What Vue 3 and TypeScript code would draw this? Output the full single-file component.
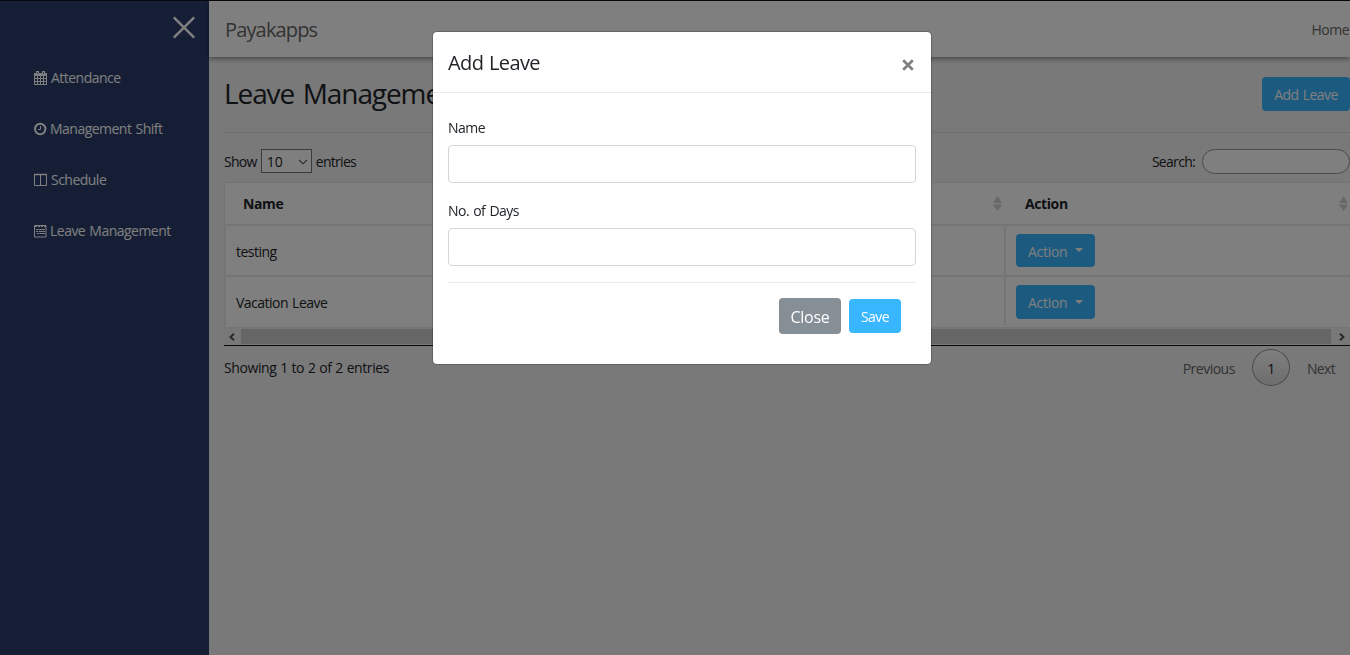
<script setup lang="ts">
import { ref } from 'vue'

interface MenuItem {
  icon: 'calendar' | 'clock' | 'columns' | 'list'
  label: string
}

const menu: MenuItem[] = [
  { icon: 'calendar', label: 'Attendance' },
  { icon: 'clock', label: 'Management Shift' },
  { icon: 'columns', label: 'Schedule' },
  { icon: 'list', label: 'Leave Management' },
]

const rows = ref<string[]>(['testing', 'Vacation Leave'])
const leaveName = ref('')
const leaveDays = ref('')
const query = ref('')
</script>

<template>
  <div class="page">
    <aside class="sidebar">
      <div class="sidebar-top">
        <svg class="sidebar-close" width="24" height="24" viewBox="0 0 24 24">
          <path d="M1.800 1.300 22.200 21.700M22.200 1.300 1.800 21.700" fill="none" stroke="#fff" stroke-width="2.500" />
        </svg>
      </div>
      <nav class="menu">
        <a v-for="item in menu" :key="item.label" class="menu-item">
          <svg class="menu-icon" :class="item.icon" width="14" height="14" viewBox="0 0 14 14" fill="none" stroke="currentColor">
            <template v-if="item.icon === 'calendar'">
              <path d="M0 2h13v12H0z" fill="currentColor" stroke="none" />
              <path d="M2 0h3v3.500H2zM8 0h3v3.500H8z" fill="currentColor" stroke="none" />
              <path d="M3.500 1v2M9.500 1v2" stroke="#2a3d6b" stroke-width=".7" />
              <path d="M1 5h2v2H1zM4 5h2v2H4zM7 5h2v2H7zM10 5h2v2h-2zM1 8h2v2H1zM4 8h2v2H4zM7 8h2v2H7zM10 8h2v2h-2zM1 11h2v2H1zM4 11h2v2H4zM7 11h2v2H7zM10 11h2v2h-2z" fill="#2a3d6b" stroke="none" />
            </template>
            <template v-else-if="item.icon === 'clock'">
              <circle cx="6.200" cy="7" r="5.200" stroke-width="2" />
              <path d="M6.500 4v3.500H4" />
            </template>
            <template v-else-if="item.icon === 'columns'">
              <path d="M.5 1.500h12v11H.5zM6.500 2v10" />
              <path d="M0 1.500h13" stroke-width="1.500" />
            </template>
            <template v-else>
              <path d="M.5 1.500h11.500v11.500H.5z" />
              <path d="M1 2.500h11" stroke-dasharray="2 1" />
              <path d="M2 5.500h2M4.500 5.500h6.500M2 7.500h2M4.500 7.500h6.500M3 9.500h2M5.500 9.500h5.500" />
            </template>
          </svg>
          <span>{{ item.label }}</span>
        </a>
      </nav>
    </aside>

    <div class="main">
      <header class="topbar">
        <span class="brand">Payakapps</span>
        <a class="home">Home</a>
      </header>

      <main class="content">
        <div class="title-row">
          <h1>Leave Management</h1>
          <button class="btn add">Add Leave</button>
        </div>

        <div class="controls">
          <div class="length">
            <span>Show</span>
            <span class="select">10
              <svg width="10" height="6" viewBox="0 0 10 6"><path d="M1 .8 5 4.800 9 .8" fill="none" stroke="#444" stroke-width="1.100" /></svg>
            </span>
            <span>entries</span>
          </div>
          <label class="search"><span>Search:</span><input v-model="query" type="text" /></label>
        </div>

        <div class="table">
          <div class="tr head">
            <div class="th first">
              <span>Name</span>
              <svg class="sort" width="9" height="15" viewBox="0 0 9 15"><path d="M0 7 4.500 0 9 7zM0 8.500h9L4.500 15z" fill="#d0d0d0" /></svg>
            </div>
            <div class="th second">
              <span>Action</span>
              <svg class="sort" width="9" height="15" viewBox="0 0 9 15"><path d="M0 7 4.500 0 9 7zM0 8.500h9L4.500 15z" fill="#d0d0d0" /></svg>
            </div>
          </div>
          <div v-for="row in rows" :key="row" class="tr body">
            <div class="td first">{{ row }}</div>
            <div class="td second">
              <button class="btn action">Action<i class="caret"></i></button>
            </div>
          </div>
        </div>

        <div class="scrollbar">
          <span class="arrow left"><svg width="6" height="8" viewBox="0 0 6 8"><path d="M5 .7 1.500 4 5 7.300" fill="none" stroke="#505050" stroke-width="1.900" /></svg></span>
          <span class="thumb"></span>
          <span class="arrow right"><svg width="6" height="8" viewBox="0 0 6 8"><path d="M1 .7 4.500 4 1 7.300" fill="none" stroke="#505050" stroke-width="1.900" /></svg></span>
        </div>

        <div class="footer">
          <span class="info">Showing 1 to 2 of 2 entries</span>
          <div class="pager">
            <span class="prev">Previous</span>
            <span class="current">1</span>
            <span class="next">Next</span>
          </div>
        </div>
      </main>
    </div>

    <div class="backdrop">
      <form class="modal" @submit.prevent>
        <div class="modal-head">
          <h5>Add Leave</h5>
          <svg width="12" height="12" viewBox="0 0 12 12"><path d="M1.200 1.200 10.800 10.800M10.800 1.200 1.200 10.800" stroke="#7f7f7f" stroke-width="2.700" /></svg>
        </div>
        <div class="modal-body">
          <label class="field"><span>Name</span><input v-model="leaveName" type="text" /></label>
          <label class="field"><span>No. of Days</span><input v-model="leaveDays" type="text" /></label>
          <div class="modal-actions">
            <button type="button" class="close">Close</button>
            <button type="submit" class="btn save">Save</button>
          </div>
        </div>
      </form>
    </div>
  </div>
</template>

<style>
body {
  margin: 0;
  overflow: hidden;
}
</style>

<style scoped>
* {
  box-sizing: border-box;
}
.page {
  display: flex;
  height: 655px;
  font: 14px/21px 'Segoe UI', 'Open Sans', 'Noto Sans', sans-serif;
  letter-spacing: -0.52px;
  word-spacing: 1px;
  color: #212529;
  background: #f2f2f2;
  border-top: 1px solid #111;
  overflow: hidden;
}
h1,
h5 {
  margin: 0;
  font-weight: 400;
}
button,
input {
  font: inherit;
  letter-spacing: inherit;
  word-spacing: inherit;
}
.sidebar {
  flex: 0 0 209px;
  background: #2a3d6b;
  color: #fff;
}
.sidebar-top {
  display: flex;
  justify-content: flex-end;
  height: 51px;
  padding: 15px 13px 0 0;
}
.menu {
  display: flex;
  flex-direction: column;
}
.menu-item {
  display: flex;
  align-items: center;
  gap: 3px;
  height: 51px;
  padding-left: 34px;
}
.menu-icon.clock,
.menu-icon.list {
  margin-right: -1px;
}
.main {
  flex: 1;
  min-width: 0;
}
.topbar {
  position: relative;
  display: flex;
  align-items: center;
  justify-content: space-between;
  height: 56px;
  padding: 0 1px 0 16px;
  background: #fff;
  box-shadow: 0 2px 5px rgba(0, 0, 0, 0.4);
}
.brand {
  font-size: 20px;
  letter-spacing: -0.85px;
  color: #666;
}
.home {
  color: #666;
}
.content {
  padding-left: 15px;
}
.title-row {
  display: flex;
  align-items: center;
  justify-content: space-between;
  height: 76px;
  border-bottom: 1px solid #dedede;
}
h1 {
  font-size: 28px;
  line-height: 34px;
  letter-spacing: -1.1px;
  word-spacing: 2.5px;
  padding-bottom: 3px;
}
.btn {
  border: 0;
  border-radius: 4px;
  color: #fff;
  background: #38b6ff;
  padding: 1px 0 0;
}
.add {
  width: 88px;
  height: 34px;
  margin-bottom: 1px;
}
.controls {
  display: flex;
  justify-content: space-between;
  height: 49px;
  padding-top: 16px;
}
.length {
  display: flex;
  gap: 4px;
  line-height: 26px;
  letter-spacing: -0.7px;
}
.select {
  display: flex;
  align-items: center;
  justify-content: space-between;
  width: 51px;
  height: 24px;
  padding: 2px 3px 0 5px;
  border: 1px solid #767676;
  background: #fff;
  letter-spacing: 0;
}
.search {
  display: flex;
  gap: 7px;
  line-height: 26px;
  letter-spacing: -0.7px;
}
.search input {
  width: 148px;
  height: 25px;
  border: 1px solid #999;
  border-radius: 13px;
  background: #fff;
}
.table {
  height: 146px;
  background: #fff;
  border: solid #ebebeb;
  border-width: 1px 0 1px 1px;
}
.tr {
  display: flex;
}
.head {
  height: 43px;
  font-weight: 700;
  letter-spacing: -0.4px;
  border-bottom: 2px solid #ebebeb;
}
.body {
  height: 51px;
  border-bottom: 2px solid #ebebeb;
  border-left: 1px solid #ebebeb;
}
.body:last-child {
  border-bottom-color: transparent;
}
.th {
  display: flex;
  align-items: center;
  justify-content: space-between;
}
.th.first {
  width: 781px;
  padding: 0 4px 0 18px;
}
.th.second {
  flex: 1;
  padding: 0 2px 0 19px;
}
.td.first {
  display: flex;
  align-items: center;
  width: 780px;
  padding: 2px 0 0 10px;
  border-right: 2px solid #ebebeb;
}
.td.second {
  padding: 8px 0 0 10px;
}
.action {
  display: flex;
  align-items: center;
  justify-content: space-between;
  width: 79px;
  height: 34px;
  padding: 1px 12px 0;
  letter-spacing: -0.3px;
}
.body:nth-child(2) .action {
  height: 33px;
}
.caret {
  border: solid transparent;
  border-width: 4px 4px 0;
  border-top-color: #fff;
  margin-top: -2px;
}
.scrollbar {
  display: flex;
  height: 18px;
  padding-top: 1px;
  background: #f1f1f1;
  border-bottom: 1px solid #111;
}
.arrow {
  display: flex;
  align-items: center;
  justify-content: center;
  width: 17px;
}
.arrow.left {
  padding: 0 2px 1px 0;
}
.arrow.right {
  width: 19px;
  padding: 0 0 1px 3px;
}
.thumb {
  flex: 1;
  height: 15px;
  background: #cdcdcd;
}
.footer {
  display: flex;
  justify-content: space-between;
}
.info {
  padding-top: 11px;
  letter-spacing: -0.4px;
  word-spacing: 0.5px;
}
.pager {
  display: flex;
  align-items: flex-start;
  padding: 3px 15px 0 0;
  color: #666;
  letter-spacing: -0.65px;
}
.prev,
.next {
  padding-top: 9px;
}
.prev {
  letter-spacing: -0.5px;
}
.current {
  width: 38px;
  height: 37px;
  margin: 0 17px;
  border: 1px solid #979797;
  border-radius: 50%;
  background: linear-gradient(#fff, #dcdcdc);
  color: #222;
  line-height: 37px;
  text-align: center;
}
.backdrop {
  position: fixed;
  inset: 0;
  background: rgba(0, 0, 0, 0.5);
}
.modal {
  width: 500px;
  height: 334px;
  margin: 31px 0 0 432px;
  border: 1px solid rgba(0, 0, 0, 0.2);
  border-radius: 5px;
  background: #fff;
  background-clip: padding-box;
}
.modal-head {
  display: flex;
  align-items: center;
  justify-content: space-between;
  height: 61px;
  padding: 0 17.5px 0 15px;
  border-bottom: 1px solid #e9ecef;
}
.modal-head h5 {
  font-size: 20px;
  letter-spacing: -0.6px;
  word-spacing: 1px;
}
.modal-head svg {
  margin-top: 5px;
}
.modal-body {
  padding: 24px 15px 0;
}
.field {
  display: flex;
  flex-direction: column;
  gap: 7px;
  height: 83px;
}
.field input {
  height: 38px;
  padding: 6px 12px;
  border: 1px solid #d4d6d8;
  border-radius: 4px;
}
.modal-actions {
  display: flex;
  justify-content: flex-end;
  gap: 8px;
  margin-top: -1px;
  padding: 15px 15px 0;
  border-top: 1px solid #e9ecef;
}
.close {
  width: 62px;
  height: 36px;
  padding: 2px 0 0;
  border: 0;
  border-radius: 4px;
  background: #868e96;
  color: #fff;
  font-size: 16px;
  letter-spacing: -0.25px;
}
.save {
  width: 52px;
  height: 34px;
  margin-top: 1px;
}
</style>
